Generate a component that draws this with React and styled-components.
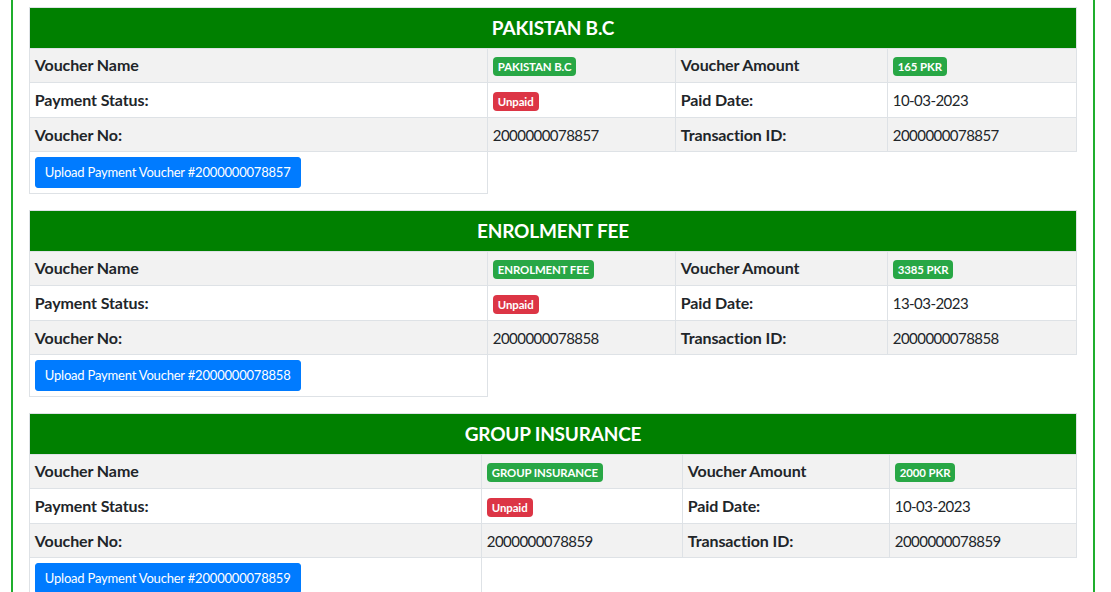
import React from 'react'
import styled, { createGlobalStyle } from 'styled-components'

const GlobalStyle = createGlobalStyle`
  html, body {
    margin: 0;
    padding: 0;
    background: #fff;
    font-family: Lato, "Liberation Sans", sans-serif;
    color: #212529;
  }
`

const Card = styled.div`
  margin: 0 16px 0 11px;
  border-left: 2px solid #1fae2d;
  border-right: 2px solid #1fae2d;
  padding: 7px 16px 0 16px;
  min-height: 600px;
`

const VoucherTable = styled.table`
  width: 100%;
  table-layout: fixed;
  border-collapse: collapse;
  margin-bottom: 16px;
`

const HeadCell = styled.th`
  background: #008000;
  color: #fff;
  font-size: 19px;
  letter-spacing: -0.2px;
  font-weight: 700;
  line-height: 30px;
  padding: 4.8px;
  text-align: center;
  border: 1px solid #dee2e6;
`

const Row = styled.tr`
  background: ${props => (props.striped ? '#f2f2f2' : '#fff')};
`

const Cell = styled.td`
  font-size: ${props => (props.bold ? '16px' : '15px')};
  letter-spacing: ${props => (props.bold ? '-0.1px' : '-0.55px')};
  line-height: 24px;
  padding: 4.8px;
  border: 1px solid #dee2e6;
  font-weight: ${props => (props.bold ? 700 : 400)};
  vertical-align: middle;
  white-space: nowrap;
`

const Badge = styled.span`
  display: inline-block;
  font-size: 11.4px;
  font-weight: 700;
  letter-spacing: -0.1px;
  line-height: 1;
  padding: 4px 5px 3.5px;
  border-radius: 4px;
  color: #fff;
  background: ${props => (props.tone === 'danger' ? '#dc3545' : '#28a745')};
  vertical-align: 0;
`

const UploadButton = styled.button`
  font-family: inherit;
  font-size: 13px;
  letter-spacing: -0.2px;
  line-height: 21px;
  padding: 4px 9px;
  border: 1px solid #007bff;
  border-radius: 3px;
  background: #007bff;
  color: #fff;
  cursor: pointer;
`

const vouchers = [
  {
    title: 'PAKISTAN B.C',
    amount: '165 PKR',
    date: '10-03-2023',
    no: '2000000078857',
    cols: [458, 188, 212, 189],
  },
  {
    title: 'ENROLMENT FEE',
    amount: '3385 PKR',
    date: '13-03-2023',
    no: '2000000078858',
    cols: [458, 188, 212, 189],
  },
  {
    title: 'GROUP INSURANCE',
    amount: '2000 PKR',
    date: '10-03-2023',
    no: '2000000078859',
    cols: [452, 201, 207, 187],
  },
]

function Voucher({ v }) {
  return (
    <VoucherTable>
      <colgroup>
        {v.cols.map((w, i) => (
          <col key={i} style={{ width: w }} />
        ))}
      </colgroup>
      <thead>
        <tr>
          <HeadCell colSpan={4}>{v.title}</HeadCell>
        </tr>
      </thead>
      <tbody>
        <Row striped>
          <Cell bold>Voucher Name</Cell>
          <Cell><Badge>{v.title}</Badge></Cell>
          <Cell bold>Voucher Amount</Cell>
          <Cell><Badge>{v.amount}</Badge></Cell>
        </Row>
        <Row>
          <Cell bold>Payment Status:</Cell>
          <Cell><Badge tone="danger">Unpaid</Badge></Cell>
          <Cell bold>Paid Date:</Cell>
          <Cell>{v.date}</Cell>
        </Row>
        <Row striped>
          <Cell bold>Voucher No:</Cell>
          <Cell>{v.no}</Cell>
          <Cell bold>Transaction ID:</Cell>
          <Cell>{v.no}</Cell>
        </Row>
        <Row>
          <Cell>
            <UploadButton>Upload Payment Voucher #{v.no}</UploadButton>
          </Cell>
        </Row>
      </tbody>
    </VoucherTable>
  )
}

export default function App() {
  return (
    <>
      <GlobalStyle />
      <Card>
        {vouchers.map(v => (
          <Voucher key={v.no} v={v} />
        ))}
      </Card>
    </>
  )
}
